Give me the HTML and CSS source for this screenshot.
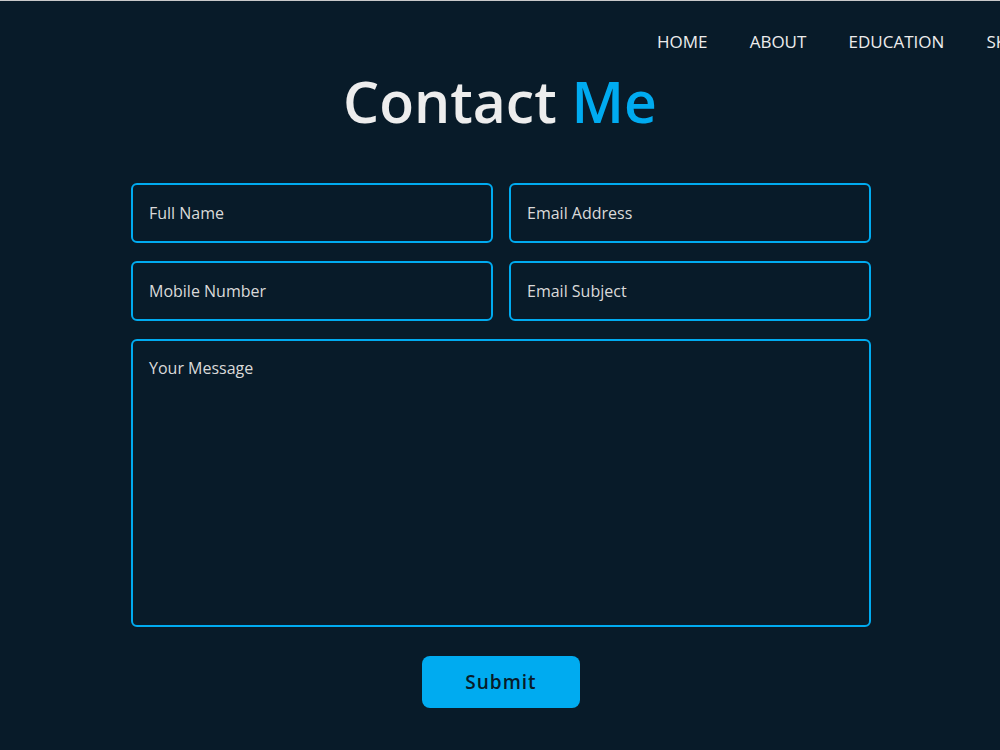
FILE: index.html
```html
<!DOCTYPE html>
<html lang="en">
  <head>
    <meta charset="UTF-8" />
    <title>Contact Me</title>
    <link rel="stylesheet" href="styles.css">
  </head>
  <body>
    <header class="header">
      <nav class="navbar">
        <a href="#">HOME</a>
        <a href="#">ABOUT</a>
        <a href="#">EDUCATION</a>
        <a href="#">SKILLS</a>
        <a href="#">PROJECTS</a>
        <a href="#">CONTACT</a>
      </nav>
    </header>

    <section class="contact">
      <h2 class="heading">Contact <span>Me</span></h2>

      <form class="contact-form">
        <div class="input-box">
          <input type="text" placeholder="Full Name" />
          <input type="email" placeholder="Email Address" />
        </div>
        <div class="input-box">
          <input type="number" placeholder="Mobile Number" />
          <input type="text" placeholder="Email Subject" />
        </div>
        <textarea placeholder="Your Message"></textarea>
        <button type="submit" class="btn">Submit</button>
      </form>
    </section>
  </body>
</html>
```

FILE: styles.css
```css
* {
  box-sizing: border-box;
}
body {
  margin: 0;
  background: #081b29;
  border-top: 1px solid #c9c9c9;
  color: #ededed;
  font-family: "Open Sans", Arial, sans-serif;
  overflow-x: hidden;
}
.header {
  display: flex;
  padding-top: 29px;
  padding-left: 657px;
  white-space: nowrap;
}
.navbar a {
  color: #ededed;
  text-decoration: none;
  font-size: 17px;
  margin-right: 38px;
}
.contact {
  display: flex;
  flex-direction: column;
  align-items: center;
}
.heading {
  margin: 13px 0 0;
  font-size: 57px;
  font-weight: 600;
  line-height: 70px;
  text-align: center;
}
.heading span {
  color: #00abf0;
}
.contact-form {
  width: 740px;
  margin-top: 47px;
  margin-left: 2px;
  display: flex;
  flex-direction: column;
  align-items: center;
}
.input-box {
  width: 100%;
  display: flex;
  justify-content: space-between;
  margin-bottom: 18px;
}
input,
textarea {
  background: transparent;
  border: 2px solid #00abf0;
  border-radius: 6px;
  color: #ededed;
  font-family: inherit;
  font-size: 16px;
  padding: 0 16px;
  outline: none;
}
input {
  width: 362px;
  height: 60px;
}
textarea {
  width: 100%;
  height: 288px;
  padding: 16px;
  resize: none;
  display: block;
}
input::placeholder,
textarea::placeholder {
  color: #dadada;
}
.btn {
  margin-top: 29px;
  width: 158px;
  height: 52px;
  background: #00abf0;
  border: none;
  border-radius: 8px;
  color: #081b29;
  font-family: inherit;
  font-size: 19px;
  font-weight: 600;
  letter-spacing: 1px;
  cursor: pointer;
}
```
